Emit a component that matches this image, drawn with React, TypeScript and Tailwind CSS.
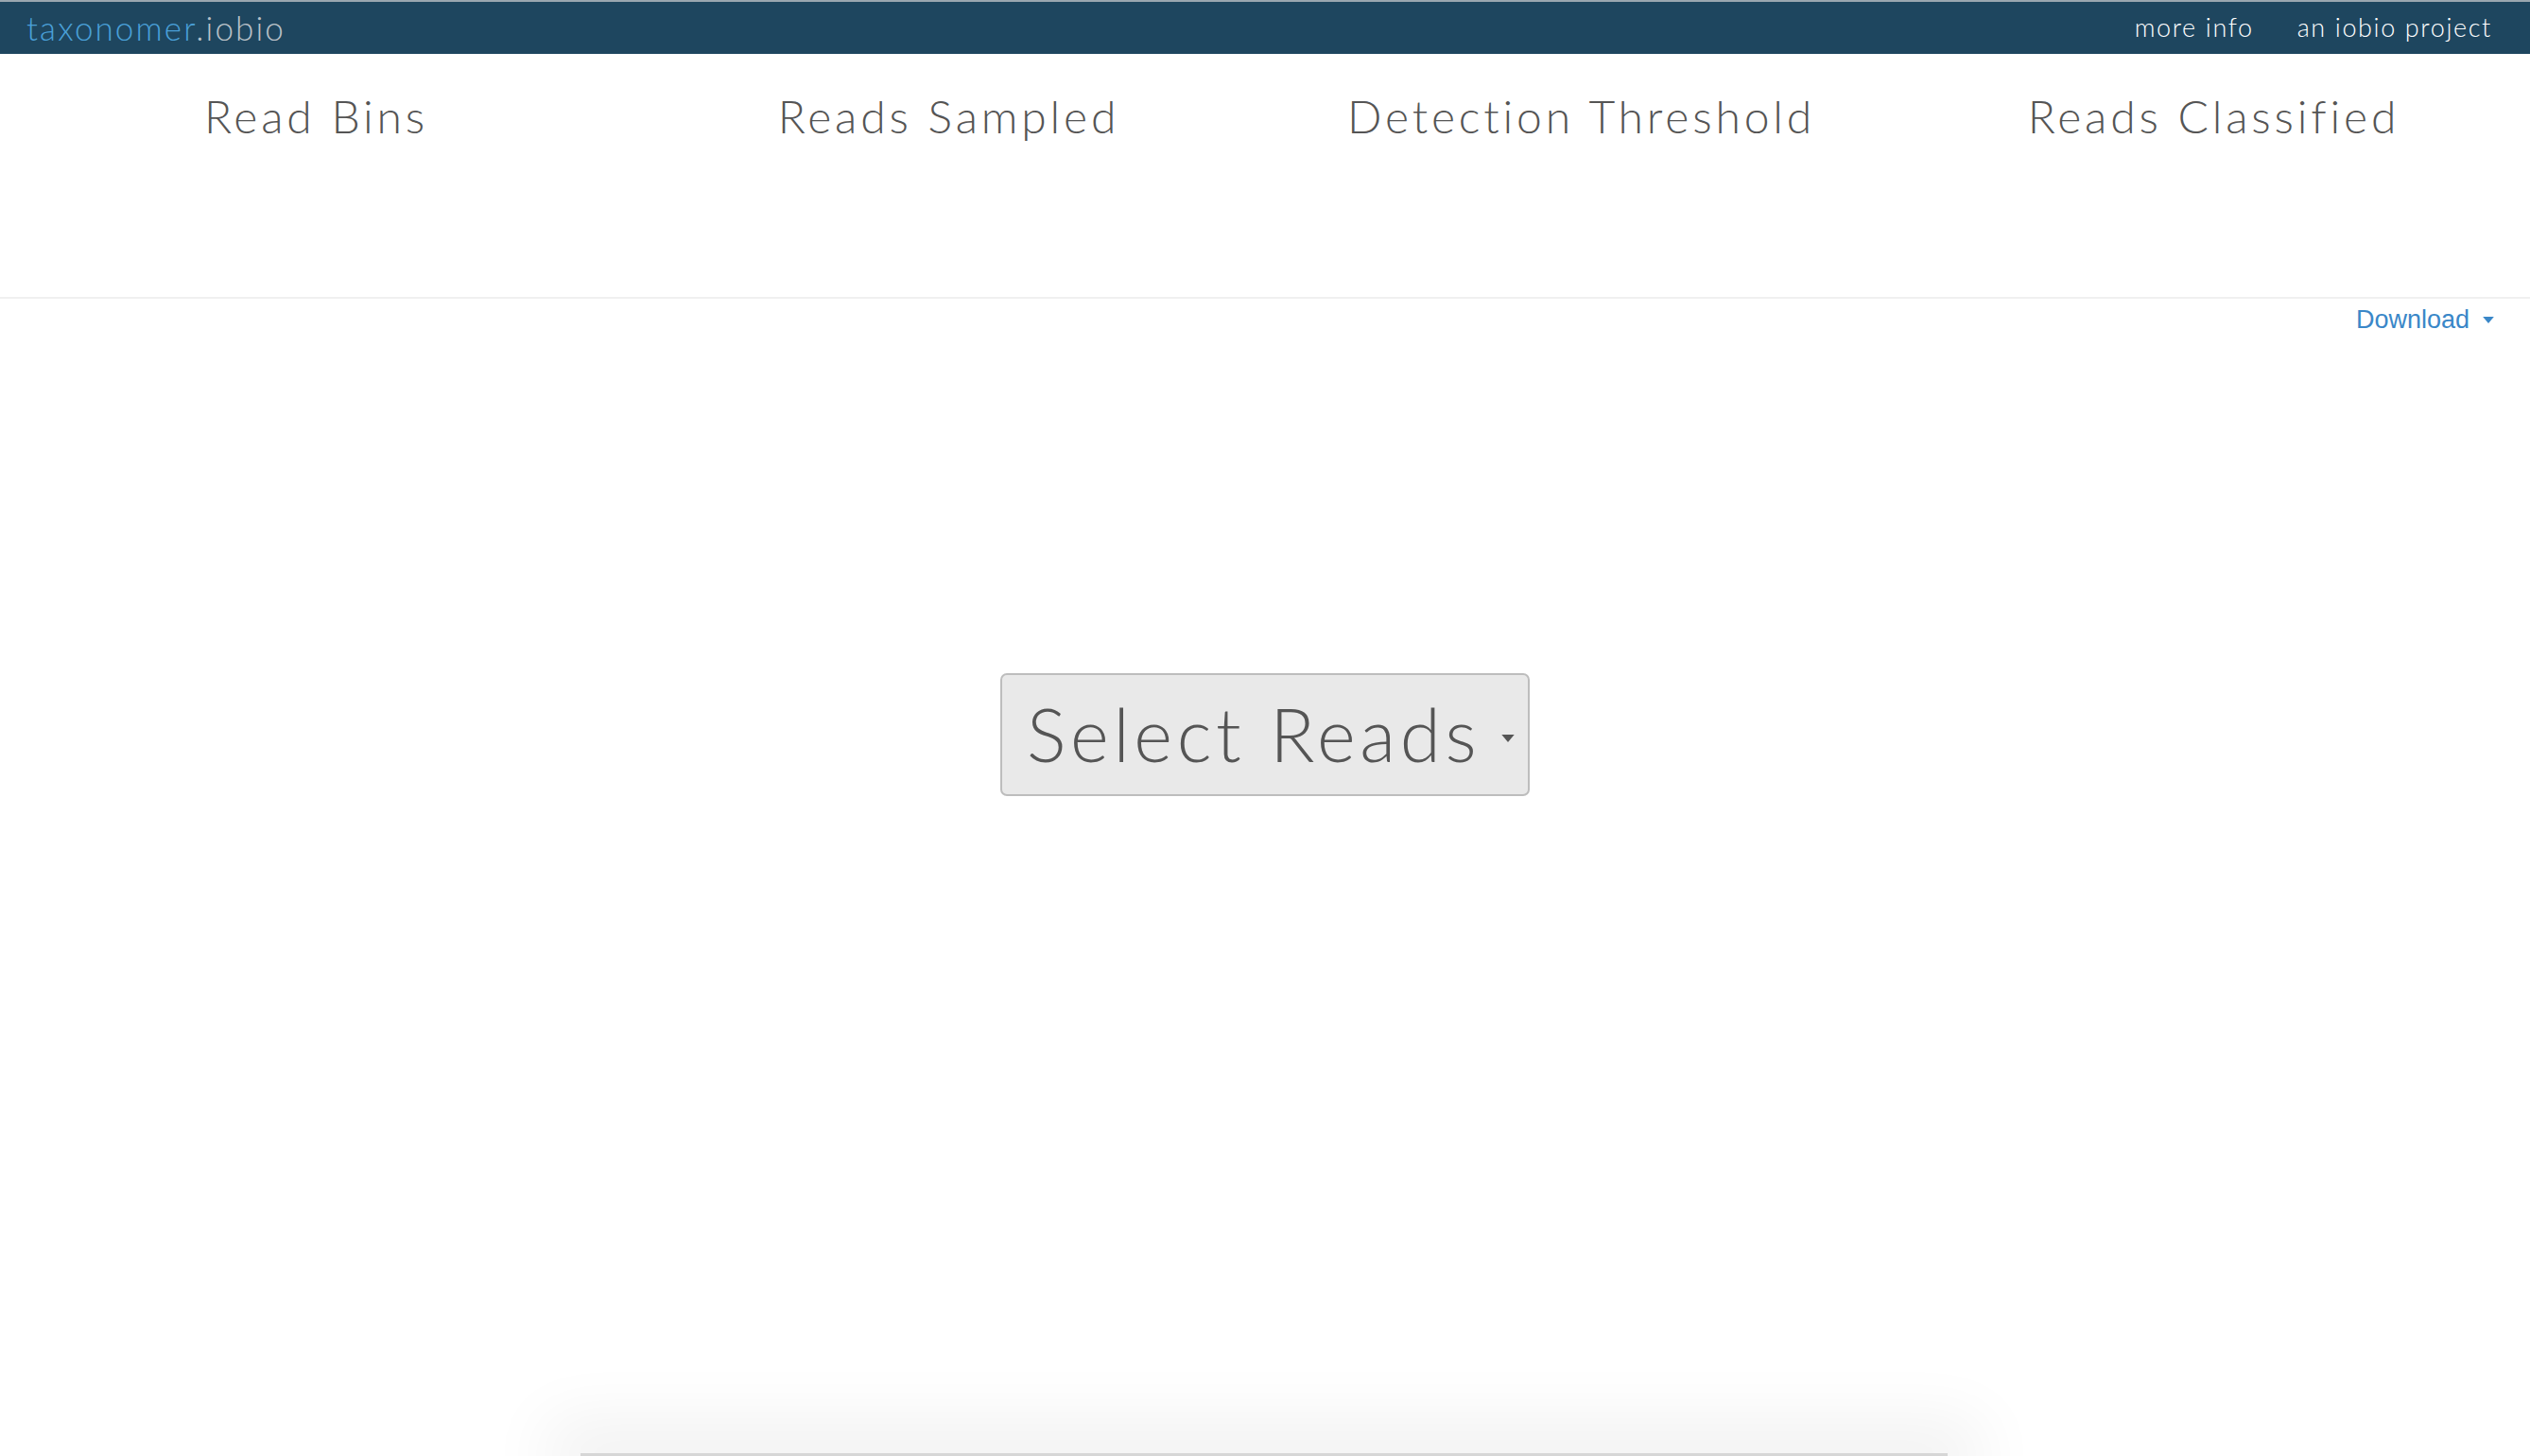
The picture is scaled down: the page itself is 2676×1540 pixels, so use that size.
const TITLES = ['Read Bins', 'Reads Sampled', 'Detection Threshold', 'Reads Classified'];

function Caret({ className }: { className?: string }) {
  return (
    <svg viewBox="0 0 10 6" className={className} fill="currentColor">
      <path d="M0 0h10L5 6z" />
    </svg>
  );
}

export default function App() {
  return (
    <div className="relative h-[1540px] w-full overflow-hidden bg-white font-['Lato','Open_Sans',sans-serif]">
      <header className="flex h-[57px] items-center justify-between border-t-2 border-[#9aa7b0] bg-[#1e465f] pl-[28px] pr-[40px]">
        <div className="text-[35px] font-light tracking-[0.06em]">
          <span className="text-[#4aa0d8]">taxonomer</span>
          <span className="text-[#b9c1c8]">.iobio</span>
        </div>
        <nav className="flex gap-[46px] text-[27px] font-light tracking-[0.06em] text-white">
          <a>more info</a>
          <a>an iobio project</a>
        </nav>
      </header>

      <section className="grid h-[259px] grid-cols-4 border-b-2 border-[#f0f0f0]">
        {TITLES.map((t) => (
          <h2
            key={t}
            className="pt-[36px] text-center text-[48px] font-light leading-[60px] tracking-[0.08em] text-[#555]"
          >
            {t}
          </h2>
        ))}
      </section>

      <div className="flex justify-end pr-[38px] pt-[2px]">
        <button className="flex items-center gap-[14px] font-['Liberation_Sans',Arial,sans-serif] text-[27px] text-[#3a87c8]">
          Download
          <Caret className="h-[7px] w-[12px]" />
        </button>
      </div>

      <main className="flex justify-center pt-[353px]">
        <button className="flex h-[130px] w-[560px] items-center gap-[22px] whitespace-nowrap rounded-[7px] border-2 border-[#bdbdbd] bg-[#e9e9e9] pl-[26px] text-[78px] font-light tracking-[0.06em] text-[#555]">
          Select Reads
          <Caret className="mt-[8px] h-[8px] w-[14px]" />
        </button>
      </main>

      <div className="absolute bottom-0 left-[614px] h-[3px] w-[1446px] bg-[#d6d6d6] shadow-[0_0_70px_35px_rgba(0,0,0,0.06)]" />
    </div>
  );
}
